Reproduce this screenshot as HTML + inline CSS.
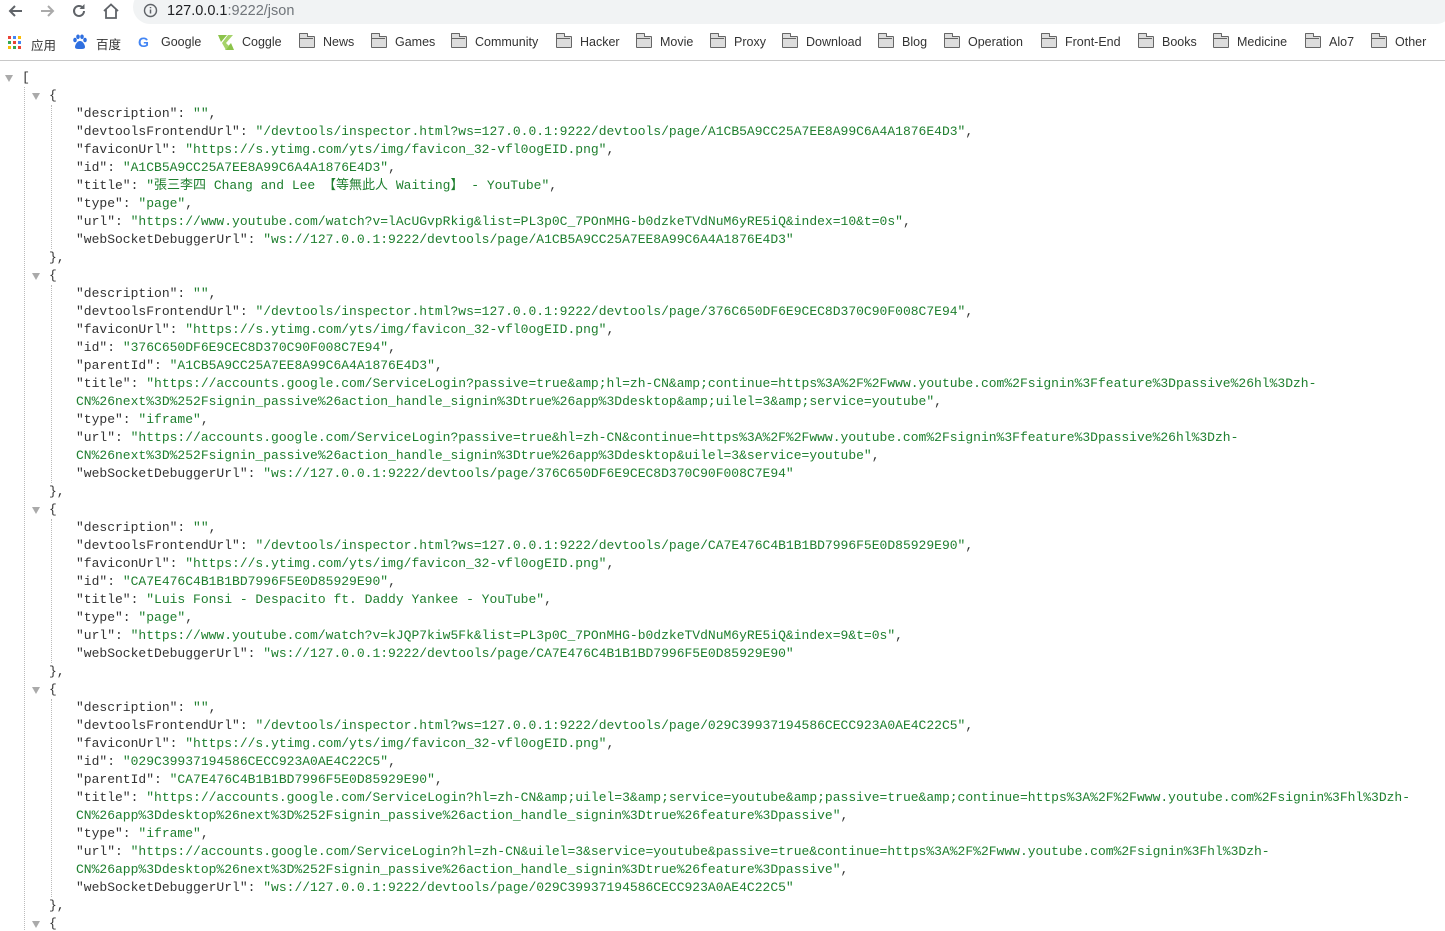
<!DOCTYPE html>
<html><head><meta charset="utf-8">
<style>
*{margin:0;padding:0;box-sizing:border-box}
html,body{width:1445px;height:931px;overflow:hidden;background:#fff}
body{position:relative;font-family:"Liberation Sans","Noto Sans CJK SC",sans-serif}
.top{position:absolute;left:0;top:0;width:1445px;height:61px;background:#fff;border-bottom:1px solid #c8c8c8}
.addr{position:absolute;left:133px;top:-10px;width:1320px;height:34px;border-radius:17px;background:#f1f3f4}
.url{position:absolute;left:167px;top:3px;font-size:14.5px;color:#202124}
.url span{color:#70757a}
.bm{position:absolute;top:35px;font-size:12.5px;color:#333;white-space:nowrap}
.fold{position:absolute;top:36px;width:16px;height:12px;border:1.3px solid #666;border-radius:1px;background:#ddd}
.fold:before{content:"";position:absolute;left:-1px;top:-4px;width:7px;height:3px;border:1.3px solid #666;border-bottom:none;border-radius:1px 1px 0 0;background:#ddd}
.fold:after{content:"";position:absolute;left:0;top:1px;width:13px;height:1px;background:#666}
.j{position:absolute;left:0;top:1px;font-family:"Liberation Mono","Noto Sans CJK SC",monospace;font-size:13px}
.l{position:absolute;height:18px;line-height:18px;white-space:pre;color:#333}
.s{color:#1e7f2e}
.arr{position:absolute;width:0;height:0;border-left:4px solid transparent;border-right:4px solid transparent;border-top:7px solid #aaa}
.g{position:absolute;width:0;border-left:1px dotted #bbb}
</style></head><body>
<div class="top">
<svg style="position:absolute;left:6px;top:3px" width="20" height="16" viewBox="0 0 20 16"><path d="M16 8H4M9 3L4 8l5 5" stroke="#5f6368" stroke-width="2" fill="none"/></svg>
<svg style="position:absolute;left:37px;top:3px" width="20" height="16" viewBox="0 0 20 16"><path d="M4 8h12M11 3l5 5-5 5" stroke="#aaa" stroke-width="2" fill="none"/></svg>
<svg style="position:absolute;left:70px;top:2px" width="18" height="18" viewBox="0 0 18 18"><path d="M14 9a5 5 0 1 1-1.5-3.6" stroke="#5f6368" stroke-width="2" fill="none"/><path d="M14.5 2v5h-5z" fill="#5f6368"/></svg>
<svg style="position:absolute;left:102px;top:2px" width="18" height="18" viewBox="0 0 18 18"><path d="M2 9L9 2.5 16 9M4 7.5V16h10V7.5" stroke="#5f6368" stroke-width="1.8" fill="none"/></svg>
<div class="addr"></div>
<svg style="position:absolute;left:143px;top:3px" width="15" height="15" viewBox="0 0 15 15"><circle cx="7.5" cy="7.5" r="6" stroke="#5f6368" stroke-width="1.4" fill="none"/><path d="M7.5 6.5v4M7.5 4v1.3" stroke="#5f6368" stroke-width="1.5"/></svg>
<div class="url">127.0.0.1<span>:9222/json</span></div>

<svg style="position:absolute;left:8px;top:36px" width="13" height="13" viewBox="0 0 13 13">
<rect x="0" y="0" width="3" height="3" fill="#ea4335"/><rect x="5" y="0" width="3" height="3" fill="#4285f4"/><rect x="10" y="0" width="3" height="3" fill="#fbbc05"/>
<rect x="0" y="5" width="3" height="3" fill="#34a853"/><rect x="5" y="5" width="3" height="3" fill="#ea4335"/><rect x="10" y="5" width="3" height="3" fill="#4285f4"/>
<rect x="0" y="10" width="3" height="3" fill="#fbbc05"/><rect x="5" y="10" width="3" height="3" fill="#34a853"/><rect x="10" y="10" width="3" height="3" fill="#ea4335"/></svg>
<div class="bm" style="left:31px">应用</div>
<svg style="position:absolute;left:72px;top:34px" width="16" height="16" viewBox="0 0 16 16" fill="#2f6fe0"><ellipse cx="3" cy="6" rx="1.8" ry="2.3"/><ellipse cx="6" cy="2.8" rx="1.8" ry="2.3"/><ellipse cx="10" cy="2.8" rx="1.8" ry="2.3"/><ellipse cx="13" cy="6" rx="1.8" ry="2.3"/><path d="M8 7c-3 0-5 4-5 6s2 2 5 2 5 0 5-2-2-6-5-6z"/></svg>
<div class="bm" style="left:96px;top:34px">百度</div>
<div class="bm" style="left:138px;font-weight:bold;font-size:14px;top:34px;color:#4285f4">G</div>
<div class="bm" style="left:161px">Google</div>
<svg style="position:absolute;left:217px;top:34px" width="18" height="17" viewBox="0 0 18 17"><path d="M1 1h9L4 8z" fill="#8bc34a"/><path d="M17 16H8l6-7z" fill="#8bc34a"/><path d="M5 9l6-8h5L9 9l3 3-3 4z" fill="#a5d36a"/></svg>
<div class="bm" style="left:242px">Coggle</div>
<div class="fold" style="left:299px"></div><div class="bm" style="left:323px">News</div>
<div class="fold" style="left:371px"></div><div class="bm" style="left:395px">Games</div>
<div class="fold" style="left:451px"></div><div class="bm" style="left:475px">Community</div>
<div class="fold" style="left:556px"></div><div class="bm" style="left:580px">Hacker</div>
<div class="fold" style="left:636px"></div><div class="bm" style="left:660px">Movie</div>
<div class="fold" style="left:710px"></div><div class="bm" style="left:734px">Proxy</div>
<div class="fold" style="left:782px"></div><div class="bm" style="left:806px">Download</div>
<div class="fold" style="left:878px"></div><div class="bm" style="left:902px">Blog</div>
<div class="fold" style="left:944px"></div><div class="bm" style="left:968px">Operation</div>
<div class="fold" style="left:1041px"></div><div class="bm" style="left:1065px">Front-End</div>
<div class="fold" style="left:1138px"></div><div class="bm" style="left:1162px">Books</div>
<div class="fold" style="left:1213px"></div><div class="bm" style="left:1237px">Medicine</div>
<div class="fold" style="left:1305px"></div><div class="bm" style="left:1329px">Alo7</div>
<div class="fold" style="left:1371px"></div><div class="bm" style="left:1395px">Other</div>
</div>

<div class="j">
<div class="arr" style="left:5px;top:74px"></div>
<div class="l" style="left:22px;top:68px">[</div>
<div class="g" style="left:24px;top:86px;height:845px"></div>

<div class="arr" style="left:32px;top:92px"></div>
<div class="l" style="left:49px;top:86px">{</div>
<div class="g" style="left:51px;top:104px;height:144px"></div>
<div class="l" style="left:76px;top:104px">"description": <span class="s">""</span>,</div>
<div class="l" style="left:76px;top:122px">"devtoolsFrontendUrl": <span class="s">"/devtools/inspector.html?ws=127.0.0.1:9222/devtools/page/A1CB5A9CC25A7EE8A99C6A4A1876E4D3"</span>,</div>
<div class="l" style="left:76px;top:140px">"faviconUrl": <span class="s">"https://s.ytimg.com/yts/img/favicon_32-vfl0ogEID.png"</span>,</div>
<div class="l" style="left:76px;top:158px">"id": <span class="s">"A1CB5A9CC25A7EE8A99C6A4A1876E4D3"</span>,</div>
<div class="l" style="left:76px;top:176px">"title": <span class="s">"張三李四 Chang and Lee 【等無此人 Waiting】 - YouTube"</span>,</div>
<div class="l" style="left:76px;top:194px">"type": <span class="s">"page"</span>,</div>
<div class="l" style="left:76px;top:212px">"url": <span class="s">"https://www.youtube.com/watch?v=lAcUGvpRkig&amp;list=PL3p0C_7POnMHG-b0dzkeTVdNuM6yRE5iQ&amp;index=10&amp;t=0s"</span>,</div>
<div class="l" style="left:76px;top:230px">"webSocketDebuggerUrl": <span class="s">"ws://127.0.0.1:9222/devtools/page/A1CB5A9CC25A7EE8A99C6A4A1876E4D3"</span></div>
<div class="l" style="left:49px;top:248px">},</div>

<div class="arr" style="left:32px;top:272px"></div>
<div class="l" style="left:49px;top:266px">{</div>
<div class="g" style="left:51px;top:284px;height:198px"></div>
<div class="l" style="left:76px;top:284px">"description": <span class="s">""</span>,</div>
<div class="l" style="left:76px;top:302px">"devtoolsFrontendUrl": <span class="s">"/devtools/inspector.html?ws=127.0.0.1:9222/devtools/page/376C650DF6E9CEC8D370C90F008C7E94"</span>,</div>
<div class="l" style="left:76px;top:320px">"faviconUrl": <span class="s">"https://s.ytimg.com/yts/img/favicon_32-vfl0ogEID.png"</span>,</div>
<div class="l" style="left:76px;top:338px">"id": <span class="s">"376C650DF6E9CEC8D370C90F008C7E94"</span>,</div>
<div class="l" style="left:76px;top:356px">"parentId": <span class="s">"A1CB5A9CC25A7EE8A99C6A4A1876E4D3"</span>,</div>
<div class="l" style="left:76px;top:374px">"title": <span class="s">"https://accounts.google.com/ServiceLogin?passive=true&amp;amp;hl=zh-CN&amp;amp;continue=https%3A%2F%2Fwww.youtube.com%2Fsignin%3Ffeature%3Dpassive%26hl%3Dzh-</span></div>
<div class="l" style="left:76px;top:392px"><span class="s">CN%26next%3D%252Fsignin_passive%26action_handle_signin%3Dtrue%26app%3Ddesktop&amp;amp;uilel=3&amp;amp;service=youtube"</span>,</div>
<div class="l" style="left:76px;top:410px">"type": <span class="s">"iframe"</span>,</div>
<div class="l" style="left:76px;top:428px">"url": <span class="s">"https://accounts.google.com/ServiceLogin?passive=true&amp;hl=zh-CN&amp;continue=https%3A%2F%2Fwww.youtube.com%2Fsignin%3Ffeature%3Dpassive%26hl%3Dzh-</span></div>
<div class="l" style="left:76px;top:446px"><span class="s">CN%26next%3D%252Fsignin_passive%26action_handle_signin%3Dtrue%26app%3Ddesktop&amp;uilel=3&amp;service=youtube"</span>,</div>
<div class="l" style="left:76px;top:464px">"webSocketDebuggerUrl": <span class="s">"ws://127.0.0.1:9222/devtools/page/376C650DF6E9CEC8D370C90F008C7E94"</span></div>
<div class="l" style="left:49px;top:482px">},</div>

<div class="arr" style="left:32px;top:506px"></div>
<div class="l" style="left:49px;top:500px">{</div>
<div class="g" style="left:51px;top:518px;height:144px"></div>
<div class="l" style="left:76px;top:518px">"description": <span class="s">""</span>,</div>
<div class="l" style="left:76px;top:536px">"devtoolsFrontendUrl": <span class="s">"/devtools/inspector.html?ws=127.0.0.1:9222/devtools/page/CA7E476C4B1B1BD7996F5E0D85929E90"</span>,</div>
<div class="l" style="left:76px;top:554px">"faviconUrl": <span class="s">"https://s.ytimg.com/yts/img/favicon_32-vfl0ogEID.png"</span>,</div>
<div class="l" style="left:76px;top:572px">"id": <span class="s">"CA7E476C4B1B1BD7996F5E0D85929E90"</span>,</div>
<div class="l" style="left:76px;top:590px">"title": <span class="s">"Luis Fonsi - Despacito ft. Daddy Yankee - YouTube"</span>,</div>
<div class="l" style="left:76px;top:608px">"type": <span class="s">"page"</span>,</div>
<div class="l" style="left:76px;top:626px">"url": <span class="s">"https://www.youtube.com/watch?v=kJQP7kiw5Fk&amp;list=PL3p0C_7POnMHG-b0dzkeTVdNuM6yRE5iQ&amp;index=9&amp;t=0s"</span>,</div>
<div class="l" style="left:76px;top:644px">"webSocketDebuggerUrl": <span class="s">"ws://127.0.0.1:9222/devtools/page/CA7E476C4B1B1BD7996F5E0D85929E90"</span></div>
<div class="l" style="left:49px;top:662px">},</div>

<div class="arr" style="left:32px;top:686px"></div>
<div class="l" style="left:49px;top:680px">{</div>
<div class="g" style="left:51px;top:698px;height:198px"></div>
<div class="l" style="left:76px;top:698px">"description": <span class="s">""</span>,</div>
<div class="l" style="left:76px;top:716px">"devtoolsFrontendUrl": <span class="s">"/devtools/inspector.html?ws=127.0.0.1:9222/devtools/page/029C39937194586CECC923A0AE4C22C5"</span>,</div>
<div class="l" style="left:76px;top:734px">"faviconUrl": <span class="s">"https://s.ytimg.com/yts/img/favicon_32-vfl0ogEID.png"</span>,</div>
<div class="l" style="left:76px;top:752px">"id": <span class="s">"029C39937194586CECC923A0AE4C22C5"</span>,</div>
<div class="l" style="left:76px;top:770px">"parentId": <span class="s">"CA7E476C4B1B1BD7996F5E0D85929E90"</span>,</div>
<div class="l" style="left:76px;top:788px">"title": <span class="s">"https://accounts.google.com/ServiceLogin?hl=zh-CN&amp;amp;uilel=3&amp;amp;service=youtube&amp;amp;passive=true&amp;amp;continue=https%3A%2F%2Fwww.youtube.com%2Fsignin%3Fhl%3Dzh-</span></div>
<div class="l" style="left:76px;top:806px"><span class="s">CN%26app%3Ddesktop%26next%3D%252Fsignin_passive%26action_handle_signin%3Dtrue%26feature%3Dpassive"</span>,</div>
<div class="l" style="left:76px;top:824px">"type": <span class="s">"iframe"</span>,</div>
<div class="l" style="left:76px;top:842px">"url": <span class="s">"https://accounts.google.com/ServiceLogin?hl=zh-CN&amp;uilel=3&amp;service=youtube&amp;passive=true&amp;continue=https%3A%2F%2Fwww.youtube.com%2Fsignin%3Fhl%3Dzh-</span></div>
<div class="l" style="left:76px;top:860px"><span class="s">CN%26app%3Ddesktop%26next%3D%252Fsignin_passive%26action_handle_signin%3Dtrue%26feature%3Dpassive"</span>,</div>
<div class="l" style="left:76px;top:878px">"webSocketDebuggerUrl": <span class="s">"ws://127.0.0.1:9222/devtools/page/029C39937194586CECC923A0AE4C22C5"</span></div>
<div class="l" style="left:49px;top:896px">},</div>

<div class="arr" style="left:32px;top:920px"></div>
<div class="l" style="left:49px;top:914px">{</div>
</div>
</body></html>
